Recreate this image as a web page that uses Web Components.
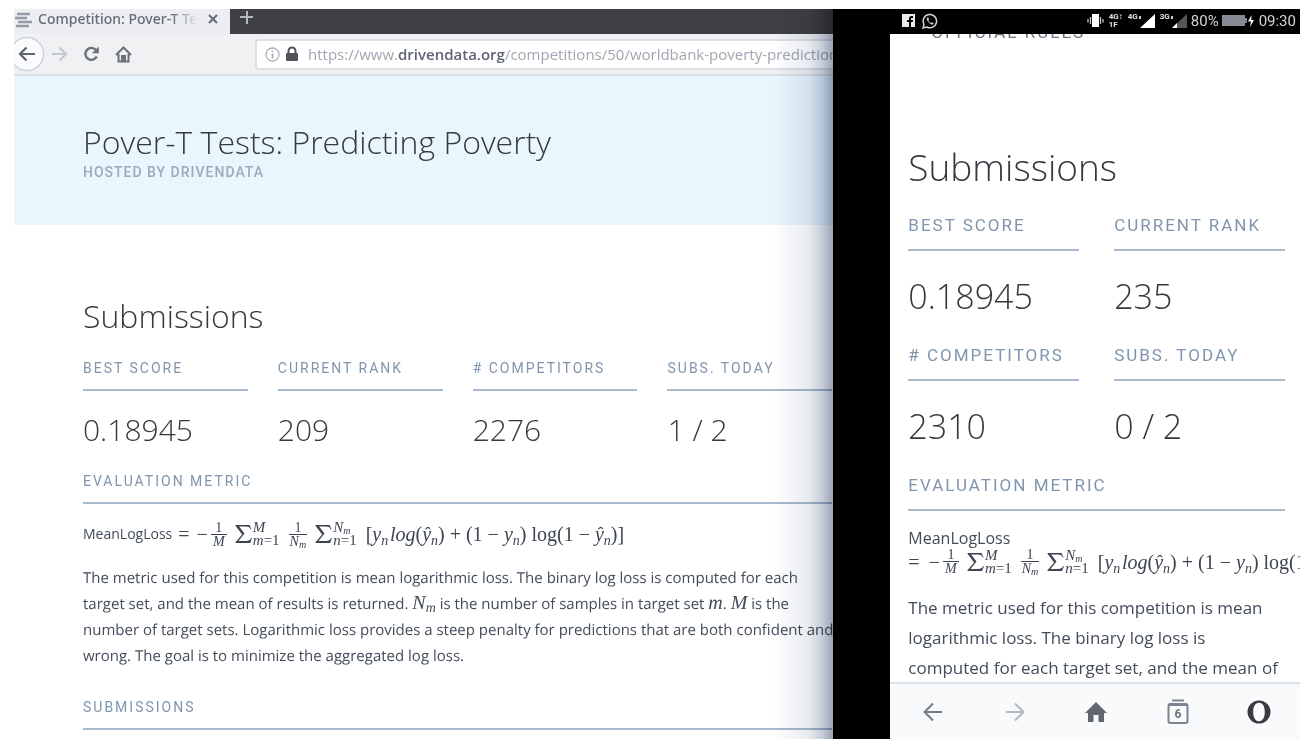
<!DOCTYPE html>
<html lang="en">
<head>
<meta charset="utf-8">
<title>Competition: Pover-T Tests</title>
<style>
html, body { margin: 0; height: 100%; background: #fff; }
body { font-family: "Open Sans", sans-serif; color: #434c5a; overflow: hidden; }
</style>
</head>
<body>
<comparison-stage>
  <desktop-browser slot="desktop"></desktop-browser>
  <phone-browser slot="phone"></phone-browser>
</comparison-stage>
<script>
function define(name, html) {
  const template = document.createElement('template');
  template.innerHTML = html;
  customElements.define(name, class extends HTMLElement {
    constructor() {
      super();
      this.attachShadow({ mode: 'open' }).append(template.content.cloneNode(true));
    }
  });
}

/* Two screens side by side on a black backdrop */
define('comparison-stage', `
<style>
:host { display: block; box-sizing: border-box; height: 100vh; padding: 9px 15px 8px 14px; }
.stage { display: grid; grid-template-columns: minmax(0, 2fr) minmax(0, 1fr); column-gap: 57px; height: 100%; background: #000; overflow: hidden; }
</style>
<main class="stage"><slot name="desktop"></slot><slot name="phone"></slot></main>`);

/* Spaced capitals with a rule beneath */
define('rule-label', `
<style>
:host { display: block; box-sizing: border-box; font: 400 var(--label-size, 14px)/24px Roboto, sans-serif; letter-spacing: 2px;
  color: #8095ad; padding-bottom: var(--label-pad, 9px); border-bottom: 2px solid #a9bace; white-space: nowrap; }
</style><slot></slot>`);

define('stat-card', `
<style>
:host { display: block; min-width: 0; }
p { margin: var(--value-gap, 19px) 0 0; font: 300 var(--value-size, 30px)/40px "Open Sans", sans-serif; color: #34383f; }
</style>
<rule-label><slot name="label"></slot></rule-label><p><slot></slot></p>`);

/* Log-loss formula */
define('loss-formula', `
<style>
:host { display: inline-flex; align-items: center; font: 400 20px/24px "Liberation Serif", serif; color: #3d4552; white-space: nowrap; }
i { font-style: italic; }
sub { font-size: 14px; line-height: 0; vertical-align: -4px; }
.eq { margin-right: var(--eq-gap, 7px); }
.minus { margin-right: 3px; }
.frac { display: inline-flex; flex-direction: column; align-items: center; font-size: 14px; line-height: 13px; min-width: 16px; }
.frac > span + span { border-top: 1px solid currentColor; align-self: stretch; text-align: center; padding: 0 1px; }
.frac sub, .lim sub { font-size: 10px; vertical-align: -2px; }
.sum { width: 19px; height: 20px; margin-left: 7px; flex: none; }
.lim { display: inline-flex; flex-direction: column; font-size: 15px; line-height: 13px; margin-right: 9px; }
</style>
<span class="eq">=</span><span class="minus">−</span>
<span class="frac"><span>1</span><span><i>M</i></span></span>
<svg class="sum" viewBox="0 0 18 20" aria-label="sum"><path d="M1 1H15L17 5.500H16.200C15.300 3 14 2.400 11 2.400H4.600L10 9.600L4 17H11.500C14.500 17 15.800 16 16.600 14H17.400L15.600 19H1V18.200L7.600 10.400L1 1.800Z" fill="currentColor"/></svg>
<span class="lim"><span><i>M</i></span><span><i>m</i>=1</span></span>
<span class="frac"><span>1</span><span><i>N</i><sub><i>m</i></sub></span></span>
<svg class="sum" viewBox="0 0 18 20" aria-label="sum"><path d="M1 1H15L17 5.500H16.200C15.300 3 14 2.400 11 2.400H4.600L10 9.600L4 17H11.500C14.500 17 15.800 16 16.600 14H17.400L15.600 19H1V18.200L7.600 10.400L1 1.800Z" fill="currentColor"/></svg>
<span class="lim"><span><i>N</i><sub><i>m</i></sub></span><span><i>n</i>=1</span></span>
<span>[<i>y<sub>n</sub>&#8202;log</i>(<i>ŷ</i><sub><i>n</i></sub>) + (1 − <i>y<sub>n</sub></i>) log(1 − <i>ŷ</i><sub><i>n</i></sub>)]</span>`);

define('browser-tabs', `
<style>
:host { display: flex; height: 25px; background: #3f4043; font: 500 14px/20px "Noto Sans", sans-serif; }
svg { flex: none; }
.tab { display: flex; align-items: center; width: 216px; box-sizing: border-box; padding: 0 11px 6px 1px; background: #eceef1; color: #646b79; }
.name { flex: 1; margin: 0 6px 0 5px; overflow: hidden; white-space: nowrap; mask-image: linear-gradient(90deg, #000 82%, transparent 98%); }
button { border: 0; padding: 0; background: none; color: inherit; display: flex; }
.new { padding: 2px 0 0 10px; align-items: flex-start; color: #b4b7be; }
</style>
<div class="tab">
<svg width="18" height="18" viewBox="0 0 18 18" fill="none" stroke="#969ba7" stroke-width="2.600"><path d="M2 4H15M0 8H12M3 12H17M1 16H14"/></svg>
<span class="name">Competition: Pover-T Tests</span>
<button aria-label="Close tab"><svg width="12" height="12" viewBox="0 0 12 12" stroke="#646b79" stroke-width="2"><path d="M2 2L10 10M10 2L2 10"/></svg></button>
</div>
<button class="new" aria-label="New tab"><svg width="14" height="14" viewBox="0 0 14 14" stroke="currentColor" stroke-width="2"><path d="M7 0V13M0 6H13"/></svg></button>`);

define('browser-toolbar', `
<style>
:host { display: flex; align-items: center; height: 42px; box-sizing: border-box; background: #f0f1f3; border-bottom: 2px solid #dcdfe3; overflow: hidden; }
svg { flex: none; }
button { border: 0; padding: 0; background: none; display: flex; flex: none; }
nav { display: flex; align-items: center; width: 241px; flex: none; }
.back { margin-left: -5px; margin-right: 6px; }
.fwd, .reload { margin-right: 15px; }
.address { flex: 1; min-width: 0; height: 31px; box-sizing: border-box; border: 2px solid #dcdfe4; border-right: 0; border-radius: 4px 0 0 4px; background: #fff; display: flex; align-items: center; padding-left: 8px; overflow: hidden; }
.url { font: 400 15px/22px "Open Sans", sans-serif; color: #a0a6b2; margin-left: 9px; white-space: nowrap; }
b { font-weight: 600; color: #5d6471; }
.lock { margin-left: 5px; }
</style>
<nav aria-label="Navigation">
<button class="back" aria-label="Back"><svg width="36" height="36" viewBox="0 0 36 36" fill="none"><circle cx="18" cy="18" r="16.500" fill="#fafbfc" stroke="#cdd1d8" stroke-width="1.500"/><path d="M26 18H12M17.500 11.500L11 18L17.500 24.500" stroke="#60646d" stroke-width="2.200"/></svg></button>
<button class="fwd" aria-label="Forward"><svg width="17" height="16" viewBox="0 0 17 16" fill="none" stroke="#c2c7d0" stroke-width="2.200"><path d="M1 8H14M8.500 1.500L15 8L8.500 14.500"/></svg></button>
<button class="reload" aria-label="Reload"><svg width="17" height="16" viewBox="0 0 17 16" fill="none"><path d="M13 4A6 6 0 1 0 13.800 10.500" stroke="#6b6f78" stroke-width="2.400"/><path d="M15.800 0.500V7.300H9Z" fill="#6b6f78"/></svg></button>
<button aria-label="Home"><svg width="17" height="17" viewBox="0 0 17 17" fill="none" stroke="#6b6f78" stroke-width="2"><path d="M1 9L8.500 1.500L16 9M3.500 8V15.500H13.500V8"/><path d="M7 15V10H10V15" fill="#6b6f78"/></svg></button>
</nav>
<button class="address" aria-label="Address">
<svg width="15" height="15" viewBox="0 0 15 15" fill="none" stroke="#a9afba" stroke-width="1.300"><circle cx="7.500" cy="7.500" r="6.500"/><path d="M7.500 6.500V11.500M7.500 3.500V5" stroke-width="1.800"/></svg>
<svg class="lock" width="14" height="16" viewBox="0 0 14 16"><path d="M3.500 8V5A3.500 3.500 0 0 1 10.500 5V8" fill="none" stroke="#50535a" stroke-width="2"/><rect x="1" y="7" width="12" height="8" rx="1" fill="#50535a"/></svg>
<span class="url">https://www.<b>drivendata.org</b>/competitions/50/worldbank-poverty-prediction</span>
</button>`);

define('desktop-browser', `
<style>
:host { display: block; position: relative; min-width: 0; background: #fff; overflow: hidden; }
:host::after { content: ""; position: absolute; inset: 0 0 0 auto; width: 60px; pointer-events: none; mix-blend-mode: multiply;
  background: linear-gradient(90deg, #fff, #e8ebef 60%, #c6ccd8 82%, #9ba2b3); }
header { background: #e9f6fd; height: 149px; box-sizing: border-box; padding: 46px 0 0 69px; }
h1, h2 { margin: 0; font: 300 32px/40px "Open Sans", sans-serif; color: #34383f; white-space: nowrap; }
header p { margin: 0; font: 500 14px/20px Roboto, sans-serif; letter-spacing: 1px; color: #a0a9b7; }
section { padding: 71px 1px 0 69px; }
.stats { display: grid; grid-template-columns: repeat(4, minmax(0, 1fr)); gap: 30px; margin: 20px 0 19px; }
.formula { display: flex; align-items: center; height: 60px; }
.formula > span { font: 400 14px/20px "Open Sans", sans-serif; margin-right: 6px; }
.text { margin: 1px -4px 26px 0; font-size: 15px; line-height: 26px; text-rendering: geometricPrecision; }
.text i { font: italic 20px/20px "Liberation Serif", serif; }
.text sub { font-size: 14px; line-height: 0; vertical-align: -3px; }
</style>
<browser-tabs></browser-tabs>
<browser-toolbar></browser-toolbar>
<header><h1>Pover-T Tests: Predicting Poverty</h1><p>HOSTED BY DRIVENDATA</p></header>
<section>
<h2>Submissions</h2>
<div class="stats">
<stat-card><span slot="label">BEST SCORE</span>0.18945</stat-card>
<stat-card><span slot="label">CURRENT RANK</span>209</stat-card>
<stat-card><span slot="label"># COMPETITORS</span>2276</stat-card>
<stat-card><span slot="label">SUBS. TODAY</span>1 / 2</stat-card>
</div>
<rule-label>EVALUATION METRIC</rule-label>
<div class="formula"><span>MeanLogLoss</span><loss-formula></loss-formula></div>
<p class="text">The metric used for this competition is mean logarithmic loss. The binary log loss is computed for each target set, and the mean of results is returned. <i>N<sub>m</sub></i> is the number of samples in target set <i>m</i>. <i>M</i> is the number of target sets. Logarithmic loss provides a steep penalty for predictions that are both confident and wrong. The goal is to minimize the aggregated log loss.</p>
<rule-label>SUBMISSIONS</rule-label>
</section>`);

define('phone-status', `
<style>
:host { display: flex; align-items: center; height: 25px; box-sizing: border-box; background: #000; color: #d2d4d8; padding: 0 4px 2px 12px; font: 400 15px/20px Roboto, sans-serif; }
svg { flex: none; }
.chat { margin-left: 7px; }
.gap { flex: 1; }
.net { font: 700 8px/8px Roboto, sans-serif; color: #e0e2e5; align-self: flex-start; padding-top: 4px; margin-left: 5px; }
.net span { display: block; }
.clock { margin-left: 4px; }
.battery { margin-left: 3px; }
</style>
<svg width="13" height="13" viewBox="0 0 13 13"><rect width="13" height="13" fill="#e8eaec"/><path d="M7 13V8H5V6H7V4.500Q7 2 9.500 2H11V4H9.800Q9 4 9 5V6H11L10.700 8H9V13Z" fill="#000"/></svg>
<svg class="chat" width="16" height="16" viewBox="0 0 16 16" fill="none"><path d="M1 15L2 11.300A6.700 6.700 0 1 1 4.700 14Z" stroke="#d0d3d7" stroke-width="1.500"/><path d="M5.200 4.500Q4 5.500 5.500 8Q7.500 11 10 11.700Q11.500 11.500 11.700 10.200L9.800 9.200L9 10Q7 9.200 6.300 7.500L7 6.500L6.300 4.500Z" fill="#d0d3d7"/></svg>
<span class="gap"></span>
<svg width="17" height="14" viewBox="0 0 17 14"><rect x="5" y="0" width="7" height="13" fill="#fff"/><path d="M3.500 3V10M13.500 3V10M1 5V8.500M16 5V8.500" stroke="#c5c7cb" stroke-width="1.300"/></svg>
<span class="net"><span>4G↕</span><span>1F</span></span>
<span class="net">4G</span>
<svg width="17" height="14" viewBox="0 0 17 14"><path d="M2 14L17 0V14Z" fill="#fff"/><path d="M2 2V5" stroke="#ccc" stroke-width="2"/></svg>
<span class="net">3G</span>
<svg width="17" height="14" viewBox="0 0 17 14"><path d="M2 14L17 0V14Z" fill="#54565a"/><path d="M2 14L7 9V14Z" fill="#fff"/><path d="M2 2V5" stroke="#ccc" stroke-width="2"/></svg>
<span class="clock">80%</span>
<svg class="battery" width="33" height="14" viewBox="0 0 33 14"><path d="M0 1H23V4H25V9H23V12H0Z" fill="#858a95"/><path d="M29.500 1L26 7.500H29L28 13L32 6H29.300Z" fill="#fff"/></svg>
<span class="clock">09:30</span>`);

define('phone-nav', `
<style>
:host { display: grid; grid-template-columns: repeat(5, 1fr); height: 57px; box-sizing: border-box; background: #f8fafc; border-top: 2px solid #dce2e8; padding-left: 2px; }
button { border: 0; padding: 0; background: none; display: flex; align-items: center; justify-content: center; }
text { font: 700 12px Roboto, sans-serif; }
</style>
<button aria-label="Back"><svg width="20" height="20" viewBox="0 0 20 20" fill="none" stroke="#747a85" stroke-width="2"><path d="M19 10H2M10 1.500L1.500 10L10 18.500"/></svg></button>
<button aria-label="Forward"><svg width="20" height="20" viewBox="0 0 20 20" fill="none" stroke="#b4bac4" stroke-width="2"><path d="M1 10H18M10 1.500L18.500 10L10 18.500"/></svg></button>
<button aria-label="Home"><svg width="22" height="20" viewBox="0 0 22 20"><path d="M11 0L22 11H19V20H13.500V13H8.500V20H3V11H0Z" fill="#62666e"/></svg></button>
<button aria-label="Tabs"><svg width="22" height="26" viewBox="0 0 22 26"><path d="M5 1.500H17" stroke="#7c8491" stroke-width="2"/><rect x="1.500" y="5" width="19" height="19" rx="2" fill="none" stroke="#7c8491" stroke-width="2"/><path d="M2 5.500H20" stroke="#7c8491" stroke-width="3"/><text x="11" y="19" text-anchor="middle" fill="#6c7480">6</text></svg></button>
<button aria-label="Opera menu"><svg width="24" height="24" viewBox="0 0 24 24"><path fill-rule="evenodd" d="M12 .5A11.500 11.500 0 1 0 12 23.500A11.500 11.500 0 1 0 12 .5ZM12 2.800C16 2.800 17.800 7 17.800 12S16 21.200 12 21.200S6.200 17 6.200 12S8 2.800 12 2.800Z" fill="#3a3c40"/></svg></button>`);

define('phone-browser', `
<style>
:host { display: flex; flex-direction: column; min-width: 0; min-height: 0; background: #fff; overflow: hidden;
  --label-size: 17px; --label-pad: 12px; --value-gap: 25px; --value-size: 34px; --eq-gap: 9px; }
section { flex: 1; min-height: 0; overflow: hidden; padding: 0 15px 0 18px; }
/* The page is scrolled: its last menu entry is half out of view */
.rules { display: block; margin: -14px 0 99px 23px; font: 400 17px/24px Roboto, sans-serif; letter-spacing: 2px; color: #6d7482; text-decoration: none; }
h2 { margin: 0; font: 300 37px/48px "Open Sans", sans-serif; color: #34383f; }
.stats { display: grid; grid-template-columns: repeat(2, minmax(0, 1fr)); gap: 27px 35px; margin: 22px 0 27px; }
.formula { margin-top: 17px; height: 65px; font: 400 16px/20px "Open Sans", sans-serif; display: flex; flex-direction: column; align-items: flex-start; }
p { margin: 0; font-size: 17px; line-height: 30px; }
</style>
<phone-status></phone-status>
<section>
<a class="rules" href="#rules">OFFICIAL RULES</a>
<h2>Submissions</h2>
<div class="stats">
<stat-card><span slot="label">BEST SCORE</span>0.18945</stat-card>
<stat-card><span slot="label">CURRENT RANK</span>235</stat-card>
<stat-card><span slot="label"># COMPETITORS</span>2310</stat-card>
<stat-card><span slot="label">SUBS. TODAY</span>0 / 2</stat-card>
</div>
<rule-label>EVALUATION METRIC</rule-label>
<div class="formula"><span>MeanLogLoss</span><loss-formula></loss-formula></div>
<p>The metric used for this competition is mean logarithmic loss. The binary log loss is computed for each target set, and the mean of</p>
</section>
<phone-nav></phone-nav>`);
</script>
</body>
</html>
